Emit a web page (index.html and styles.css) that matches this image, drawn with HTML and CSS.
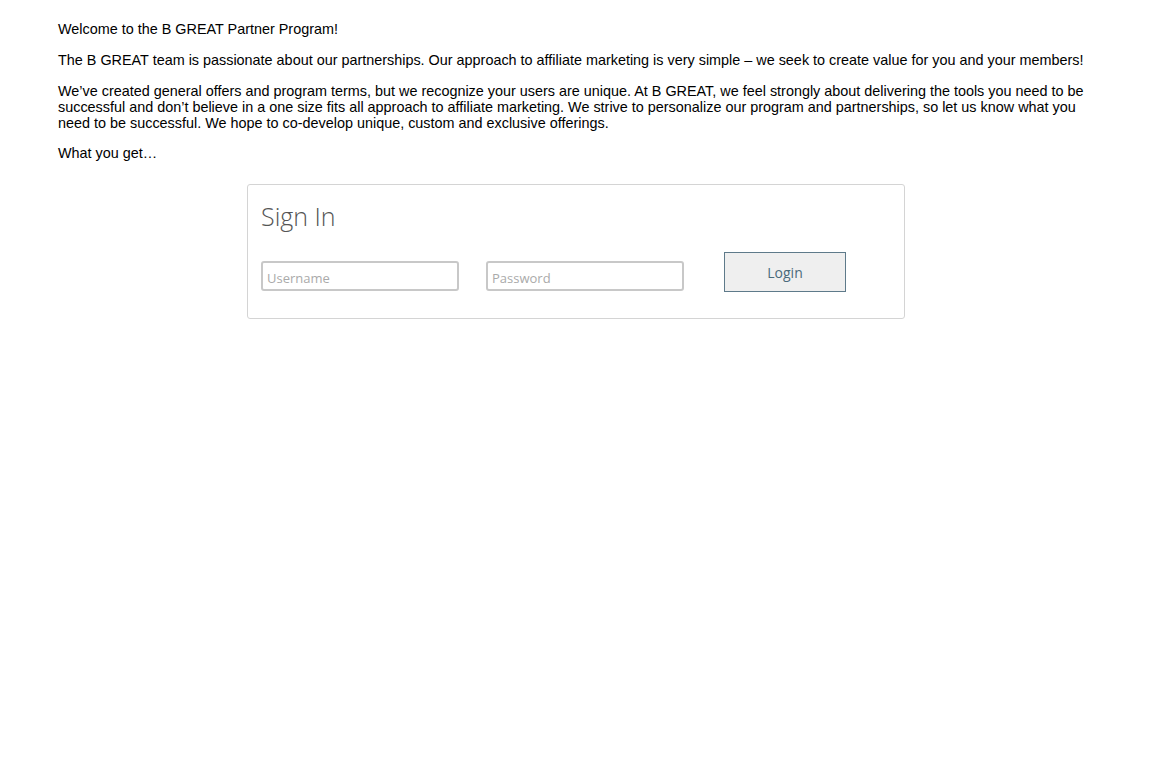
FILE: index.html
```html
<!DOCTYPE html>
<html>
<head>
<meta charset="utf-8">
<link rel="stylesheet" href="styles.css">
</head>
<body>
<div class="intro">
  <p>Welcome to the B GREAT Partner Program!</p>
  <p>The B GREAT team is passionate about our partnerships. Our approach to affiliate marketing is very simple – we seek to create value for you and your members!</p>
  <p>We’ve created general offers and program terms, but we recognize your users are unique. At B GREAT, we feel strongly about delivering the tools you need to be successful and don’t believe in a one size fits all approach to affiliate marketing. We strive to personalize our program and partnerships, so let us know what you need to be successful. We hope to co-develop unique, custom and exclusive offerings.</p>
  <p>What you get…</p>
</div>
<div class="card">
  <h2 class="card-title">Sign In</h2>
  <div class="form-row">
    <input class="field" type="text" placeholder="Username">
    <input class="field" type="password" placeholder="Password">
    <button class="login-btn">Login</button>
  </div>
</div>
</body>
</html>
```
FILE: styles.css
```css
html, body {
  margin: 0;
  padding: 0;
  background: #ffffff;
}
body {
  font-family: "Liberation Sans", Arial, sans-serif;
  color: #000;
}
.intro {
  padding: 0 58px 0 58px;
  height: 161px;
  overflow: hidden;
  font-size: 14.4px;
  line-height: 16px;
}
.intro p {
  margin: 0;
  padding-top: 21px;
}
.intro p + p {
  padding-top: 15px;
}
.intro p:last-child {
  padding-top: 14px;
}
.card {
  box-sizing: border-box;
  width: 658px;
  height: 135px;
  margin: 23px auto 0;
  border: 1px solid #d4d4d4;
  border-radius: 3px;
  padding: 16px 13px 0 13px;
}
.card-title {
  margin: 0;
  font-family: "Open Sans", Lato, sans-serif;
  font-weight: 300;
  font-size: 25px;
  line-height: 30px;
  color: #555;
}
.form-row {
  display: flex;
  align-items: flex-end;
  margin-top: 21px;
}
.field {
  box-sizing: border-box;
  width: 198px;
  height: 30px;
  margin-bottom: 1px;
  border: 2px solid #c8c8c8;
  border-radius: 3px;
  padding: 3px 4px 0;
  font-family: "Open Sans", Lato, sans-serif;
  font-size: 13px;
  color: #555;
  background: #fff;
  outline: none;
}
.field::placeholder {
  color: #aaa;
}
.field + .field {
  margin-left: 27px;
}
.login-btn {
  box-sizing: border-box;
  width: 122px;
  height: 40px;
  margin-left: 40px;
  background: #efefef;
  border: 1px solid #5e7a8a;
  border-radius: 0;
  font-family: "Open Sans", Lato, sans-serif;
  font-size: 14px;
  color: #4b6a7b;
  cursor: pointer;
}
```
